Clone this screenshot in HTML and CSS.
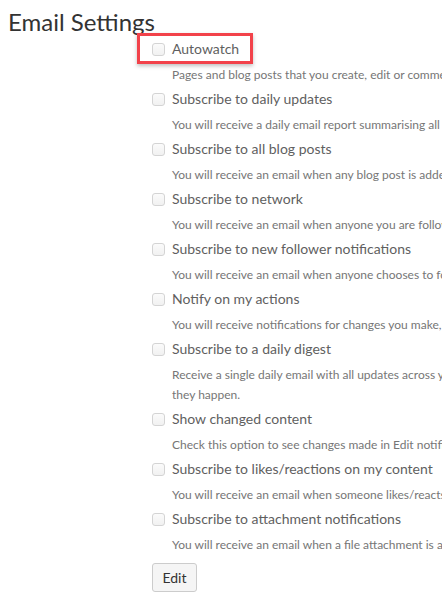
FILE: index.html
```html
<!DOCTYPE html>
<html lang="en">

<head>
    <meta charset="UTF-8">
    <title>Email Settings</title>
    <link rel="stylesheet" href="styles.css">
</head>

<body>
    <h2 class="page-title">Email Settings</h2>
    <form class="settings" id="email-settings">
        <div class="field">
            <label class="field-label highlight"><input type="checkbox" name="autowatch">Autowatch</label>
            <div class="field-desc">Pages and blog posts that you create, edit or comment on will be automatically watched</div>
        </div>
        <div class="field">
            <label class="field-label"><input type="checkbox" name="daily">Subscribe to daily updates</label>
            <div class="field-desc">You will receive a daily email report summarising all the changes in your spaces</div>
        </div>
        <div class="field">
            <label class="field-label"><input type="checkbox" name="blogs">Subscribe to all blog posts</label>
            <div class="field-desc">You will receive an email when any blog post is added to the site</div>
        </div>
        <div class="field">
            <label class="field-label"><input type="checkbox" name="network">Subscribe to network</label>
            <div class="field-desc">You will receive an email when anyone you are following makes a change</div>
        </div>
        <div class="field">
            <label class="field-label"><input type="checkbox" name="follower">Subscribe to new follower notifications</label>
            <div class="field-desc">You will receive an email when anyone chooses to follow you</div>
        </div>
        <div class="field">
            <label class="field-label"><input type="checkbox" name="own">Notify on my actions</label>
            <div class="field-desc">You will receive notifications for changes you make, as well as others</div>
        </div>
        <div class="field">
            <label class="field-label"><input type="checkbox" name="digest">Subscribe to a daily digest</label>
            <div class="field-desc wrap">Receive a single daily email with all updates across your spaces instead of separate emails&nbsp;as they&nbsp;happen.</div>
        </div>
        <div class="field">
            <label class="field-label"><input type="checkbox" name="diff">Show changed content</label>
            <div class="field-desc">Check this option to see changes made in Edit notifications</div>
        </div>
        <div class="field">
            <label class="field-label"><input type="checkbox" name="likes">Subscribe to likes/reactions on my content</label>
            <div class="field-desc">You will receive an email when someone likes/reacts to your content</div>
        </div>
        <div class="field">
            <label class="field-label"><input type="checkbox" name="attachments">Subscribe to attachment notifications</label>
            <div class="field-desc">You will receive an email when a file attachment is added to a page you watch</div>
        </div>
        <button type="button" class="edit-button">Edit</button>
    </form>
</body>
</html>
```

FILE: styles.css
```css
html, body {
    overflow: hidden;
}

body {
    font-family: Lato, "Liberation Sans", sans-serif;
    margin: 0;
    padding: 0;
    color: #333;
    background-color: #fff;
}

.page-title {
    font-size: 24px;
    font-weight: normal;
    line-height: 30px;
    margin: 7px 0 0 8px;
    color: #333;
}

.settings {
    width: 560px;
    margin: 2px 0 0 152px;
}

.field {
    margin-bottom: 4px;
}

.field-label {
    display: flex;
    align-items: center;
    gap: 7px;
    height: 20px;
    line-height: 20px;
    font-size: 14px;
    color: #5f5f5f;
    white-space: nowrap;
}

.field-label input[type="checkbox"] {
    appearance: none;
    width: 13px;
    height: 13px;
    margin: 0;
    border: 1px solid #d4d4d4;
    border-radius: 3px;
    background: linear-gradient(#fbfbfb, #f1f1f1);
}

.highlight {
    position: relative;
    width: max-content;
}

.highlight::after {
    content: "";
    position: absolute;
    left: -15px;
    top: -6px;
    right: -14px;
    bottom: -5px;
    border: 3px solid #f2424a;
    box-shadow: 0 2px 4px rgba(0, 0, 0, 0.25);
}

.field-desc {
    margin: 6px 0 0 20px;
    font-size: 12px;
    line-height: 20px;
    color: #767676;
    white-space: nowrap;
}

.field-desc.wrap {
    white-space: normal;
    width: 490px;
}

.edit-button {
    margin-top: 4px;
    width: 45px;
    height: 29px;
    padding: 0;
    font-family: inherit;
    font-size: 14px;
    color: #333;
    background-color: #f5f5f5;
    border: 1px solid #ccc;
    border-radius: 3px;
}
```
